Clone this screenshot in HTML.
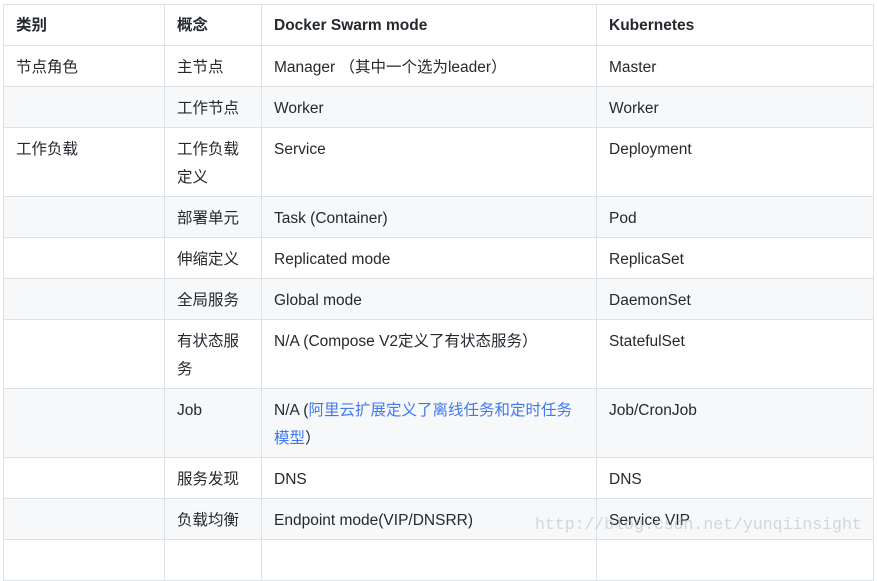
<!DOCTYPE html>
<html><head><meta charset="utf-8"><style>
body{margin:0;background:#fff;width:877px;height:546px;overflow:hidden;position:relative;font-family:"Liberation Sans","Noto Sans CJK SC",sans-serif;font-size:15.5px;color:#24292e}
table{position:absolute;left:3px;top:4px;border-collapse:collapse;table-layout:fixed;width:870px}
td,th{border:1px solid #dfe2e5;padding:0 12px;vertical-align:top;line-height:28px;text-align:left;box-sizing:border-box}
th{font-weight:bold;height:41px;vertical-align:middle;padding-top:2px}
td{padding-top:8px;padding-bottom:4px}
tr.g td{background:#f6f8fa}
tr.r td{height:41px}
tr.d td{height:69px}
a{color:#4078f2;text-decoration:none}
.wm{position:absolute;left:535px;top:515px;font-family:"Liberation Mono",monospace;font-size:16.5px;color:rgba(170,170,170,0.45)}
</style></head><body>
<table>
<colgroup><col style="width:161px"><col style="width:97px"><col style="width:335px"><col style="width:277px"></colgroup>
<tr><th>类别</th><th>概念</th><th>Docker Swarm mode</th><th>Kubernetes</th></tr>
<tr class="r"><td>节点角色</td><td>主节点</td><td>Manager （其中一个选为leader）</td><td>Master</td></tr>
<tr class="r g"><td></td><td>工作节点</td><td>Worker</td><td>Worker</td></tr>
<tr class="d"><td>工作负载</td><td>工作负载定义</td><td>Service</td><td>Deployment</td></tr>
<tr class="r g"><td></td><td>部署单元</td><td>Task (Container)</td><td>Pod</td></tr>
<tr class="r"><td></td><td>伸缩定义</td><td>Replicated mode</td><td>ReplicaSet</td></tr>
<tr class="r g"><td></td><td>全局服务</td><td>Global mode</td><td>DaemonSet</td></tr>
<tr class="d"><td></td><td>有状态服务</td><td>N/A (Compose V2定义了有状态服务）</td><td>StatefulSet</td></tr>
<tr class="d g"><td></td><td>Job</td><td>N/A (<a>阿里云扩展定义了离线任务和定时任务模型</a>）</td><td>Job/CronJob</td></tr>
<tr class="r"><td></td><td>服务发现</td><td>DNS</td><td>DNS</td></tr>
<tr class="r g"><td></td><td>负载均衡</td><td>Endpoint mode(VIP/DNSRR)</td><td>Service VIP</td></tr>
<tr class="r"><td></td><td></td><td></td><td></td></tr>
</table>
<div class="wm">http://blog.csdn.net/yunqiinsight</div>
</body></html>
